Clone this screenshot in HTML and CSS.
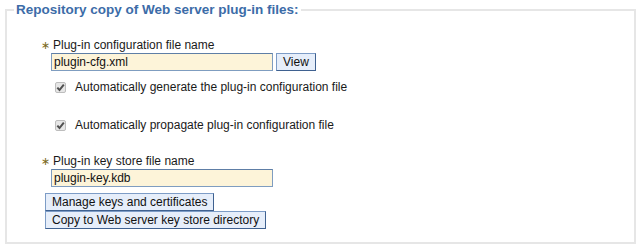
FILE: index.html
```html
<!DOCTYPE html>
<html lang="en">
<head>
    <meta charset="UTF-8">
    <title>Web server plug-in files</title>
    <link rel="stylesheet" href="styles.css">
</head>
<body>
    <fieldset class="panel">
        <legend>Repository copy of Web server plug-in files:</legend>

        <div class="panel-body">
            <div class="field">
                <label class="field-label" for="cfg"><span class="req">&#8727;</span>Plug-in configuration file name</label>
                <div class="field-row">
                    <input class="text-input" type="text" id="cfg" value="plugin-cfg.xml">
                    <button class="btn">View</button>
                </div>
            </div>

            <div class="check-row first">
                <span class="check">
                    <svg width="11" height="11" viewBox="0 0 11 11"><path d="M2.3 5.6 L4.5 8 L8.8 2.6" fill="none" stroke="#505050" stroke-width="2"/></svg>
                </span>
                <span>Automatically generate the plug-in configuration file</span>
            </div>

            <div class="check-row second">
                <span class="check">
                    <svg width="11" height="11" viewBox="0 0 11 11"><path d="M2.3 5.6 L4.5 8 L8.8 2.6" fill="none" stroke="#505050" stroke-width="2"/></svg>
                </span>
                <span>Automatically propagate plug-in configuration file</span>
            </div>

            <div class="field key-field">
                <label class="field-label" for="kdb"><span class="req">&#8727;</span>Plug-in key store file name</label>
                <div class="field-row">
                    <input class="text-input" type="text" id="kdb" value="plugin-key.kdb">
                </div>
            </div>

            <div class="actions">
                <button class="btn">Manage keys and certificates</button>
                <button class="btn">Copy to Web server key store directory</button>
            </div>
        </div>
    </fieldset>
</body>
</html>
```

FILE: styles.css
```css
body {
    font-family: "Liberation Sans", Arial, sans-serif;
    font-size: 12px;
    color: #1a1a1a;
    margin: 0;
    background: #fff;
}
.panel {
    margin: 2px 6px 0 5px;
    padding: 21px 8px 13px 7px;
    border: 2px solid #e6e6e6;
    min-width: 0;
}
.panel legend {
    font-size: 13.5px;
    font-weight: bold;
    color: #3c6ca8;
    padding: 0 2px;
}
.panel-body {
    padding-left: 27px;
}
.field-label {
    display: block;
    line-height: 14px;
}
.req {
    display: inline-block;
    width: 12px;
    color: #7b6a1c;
    font-family: "DejaVu Sans", sans-serif;
    font-size: 11px;
}
.field-row {
    display: flex;
    gap: 3px;
    padding-left: 10px;
}
.text-input {
    width: 222px;
    height: 18px;
    box-sizing: border-box;
    margin: 0;
    padding: 0 2px;
    font-family: "Liberation Sans", Arial, sans-serif;
    font-size: 12px;
    color: #111;
    background: #fdf4d9;
    border: 1px solid #7f9dc0;
    border-top-color: #5e7ea6;
    outline: none;
}
.btn {
    display: block;
    height: 18px;
    margin: 0;
    padding: 0 6px;
    font-family: "Liberation Sans", Arial, sans-serif;
    font-size: 12px;
    color: #111;
    background: #e6eefa;
    border: 1px solid #7d9cc6;
    border-right-color: #3f6190;
    border-bottom-color: #3f6190;
    border-radius: 0;
}
.check-row {
    display: flex;
    align-items: center;
    gap: 9px;
    padding-left: 14px;
    line-height: 14px;
}
.check-row.first {
    margin-top: 9px;
}
.check-row.second {
    margin-top: 24px;
}
.check {
    display: flex;
    width: 11px;
    height: 11px;
    box-sizing: border-box;
    background: #e6e6e6;
    border: 1px solid #bdbdbd;
    border-radius: 2px;
    align-items: center;
    justify-content: center;
}
.check svg {
    flex: none;
}
.key-field {
    margin-top: 22px;
}
.actions {
    display: flex;
    flex-direction: column;
    align-items: flex-start;
    margin-top: 6px;
    margin-left: 4px;
}
```
